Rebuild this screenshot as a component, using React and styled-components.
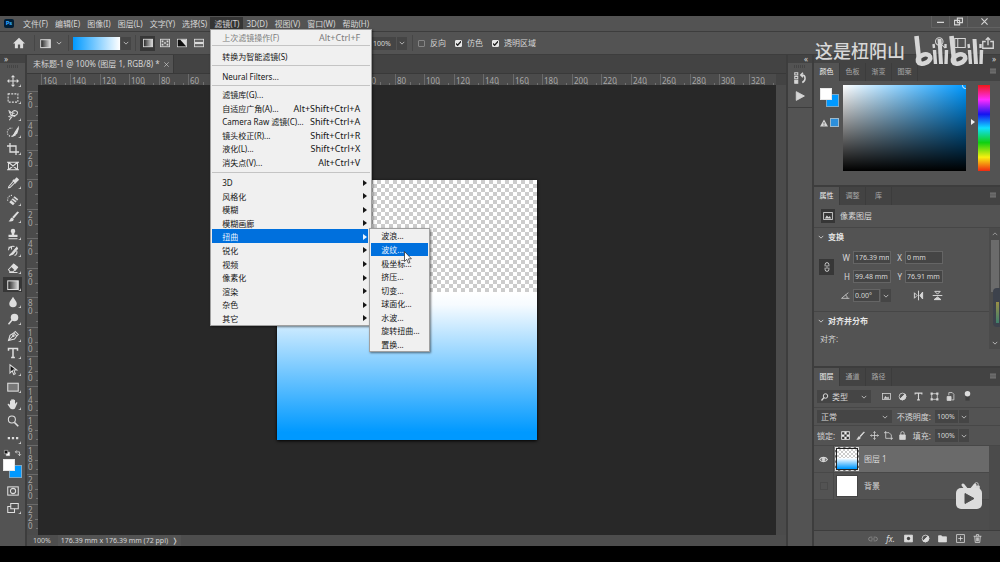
import React from 'react'
import styled, { createGlobalStyle, css } from 'styled-components'

const C = {
  panel: '#535353',
  strip: '#434343',
  line: '#3d3d3d',
  field: '#454545',
  fieldLine: '#656565',
  canvas: '#282828',
  ruler: '#4b4b4b',
  text: '#d6d6d6',
  dim: '#a8a8a8',
  accent: '#0099ff',
  menu: '#f0f0f0',
  select: '#0070dd',
}

const GlobalStyle = createGlobalStyle`
  * { box-sizing: border-box; }
  body { margin: 0; background: #000; }
  body, button, input, select {
    font-family: 'Noto Sans', 'Noto Sans CJK SC', sans-serif;
    font-size: 8px;
    line-height: 12px;
    color: ${C.text};
  }
  button { background: none; border: 0; padding: 0; }
  h2, ul, p { margin: 0; padding: 0; list-style: none; }
`

const checker = (size) => css`
  background-color: #fff;
  background-image: conic-gradient(#ccc 25%, #fff 0 50%, #ccc 0 75%, #fff 0);
  background-size: ${size}px ${size}px;
`

/* ---------- shell ---------- */

const Screen = styled.div`
  position: relative;
  display: flex;
  flex-direction: column;
  min-height: 100vh;
  padding: 16px 0;
  background: #000;
`

const Row = styled.div`
  display: flex;
  align-items: center;
  gap: ${(p) => p.$gap || 0}px;
`

const Workspace = styled.main`
  display: flex;
  flex: 1;
  gap: 2px;
  background: ${C.line};
`

const Svg = styled.svg`
  display: block;
  flex: none;
  overflow: visible;
`

const Icon = ({ size = 12, box = 16, children, ...rest }) => (
  <Svg
    width={size}
    height={size}
    viewBox={`0 0 ${box} ${box}`}
    fill="none"
    stroke="currentColor"
    strokeWidth="1.4"
    aria-hidden="true"
    {...rest}
  >
    {children}
  </Svg>
)

const Chevron = () => (
  <Icon size={6} strokeWidth="2">
    <path d="M2 5l6 6 6-6" />
  </Icon>
)

/* ---------- menu bar ---------- */

const TitleBar = styled.header`
  display: flex;
  height: 16px;
  padding-left: 4px;
  background: ${C.panel};
  border-bottom: 1px solid ${C.line};
`

const AppLogo = styled.span`
  width: 10px;
  height: 9px;
  margin: 3px 5px 0 0;
  border-radius: 2px;
  background: #001e36;
  color: #31a8ff;
  font-size: 6px;
  font-weight: 700;
  line-height: 8px;
  text-align: center;
`

const MenuBar = styled.nav`
  display: flex;
  flex: 1;
`

const MenuSlot = styled.div`
  position: relative;
`

const MenuButton = styled.button`
  height: 13px;
  margin-top: 1px;
  padding: 0 3px 0 4px;
  white-space: nowrap;
  background: ${(p) => (p.$open ? '#353535' : 'none')};
`

const WindowButton = styled.button`
  display: grid;
  place-items: center;
  width: ${(p) => p.$w}px;
  height: 12px;
  border: solid #626262;
  border-width: 0 0 1px 1px;
`

const Menu = styled.div`
  position: absolute;
  z-index: 5;
  top: 13px;
  left: 0;
  width: 162px;
  border: 1px solid #a0a0a0;
  background: ${C.menu};
  box-shadow: 1px 1px 2px rgba(0, 0, 0, 0.5);
`

const SubMenu = styled(Menu)`
  top: -1px;
  left: 158px;
  width: 61px;
`

const MenuGroup = styled.div`
  display: grid;
  grid-auto-rows: 1fr;
  height: ${(p) => p.$h}px;
  margin: ${(p) => p.$pad || '0'};
`

const Separator = styled.hr`
  height: 1px;
  margin: 0 1px;
  border: 0;
  background: #c4c4c4;
`

const ItemWrap = styled.div`
  position: relative;
  display: grid;
`

const MenuItem = styled.button`
  display: flex;
  align-items: center;
  justify-content: space-between;
  min-height: 0;
  margin: 0 ${(p) => (p.$sub ? 1 : 3)}px 0 1px;
  padding: ${(p) => (p.$sub ? '0 0 0 10px' : '2px 8px 0 10px')};
  color: ${(p) => (p.$active ? '#e8f4ff' : p.disabled ? '#7c7c7c' : '#151515')};
  background: ${(p) => (p.$active ? C.select : 'none')};
  line-height: 11px;
  white-space: nowrap;
`

const Shortcut = styled.span`
  font-size: 9px;
`

const ArrowMark = styled.span`
  margin-right: -7px;
  border: 3px solid transparent;
  border-left: 4px solid currentColor;
  border-right: 0;
`

const Cursor = styled(Svg)`
  position: absolute;
  z-index: 6;
  left: 34px;
  top: 8px;
`

/* ---------- options bar ---------- */

const OptionsBar = styled.div`
  display: flex;
  align-items: center;
  height: 23px;
  padding: 0 6px 0 12px;
  background: ${C.panel};
  border-bottom: 1px solid ${C.line};
`

const Rule = styled.span`
  width: 1px;
  height: 16px;
  margin: 0 ${(p) => p.$r || 5}px 0 ${(p) => p.$l || 7}px;
  background: #464646;
`

const IconButton = styled.button`
  display: grid;
  place-items: center;
  width: ${(p) => p.$w || 15}px;
  height: ${(p) => p.$h || 15}px;
  color: ${(p) => (p.$dim ? '#8a8a8a' : '#dcdcdc')};
  background: ${(p) => (p.$on ? '#373737' : 'none')};
`

const GradientSwatch = styled.button`
  width: 47px;
  height: 13px;
  background: linear-gradient(90deg, ${C.accent}, #fff);
`

const TypeGroup = styled.div`
  display: flex;
  gap: 2px;
  flex: none;
  width: 231px;
`

const Field = styled.input`
  width: ${(p) => p.$w || 38}px;
  height: 13px;
  padding: 0 1px;
  border: 1px solid ${C.fieldLine};
  border-radius: 0;
  background: ${C.field};
  font-size: 7px;
  outline: none;
`

const PlainField = styled(Field)`
  border-color: ${C.field};
`

const DropButton = styled.button`
  display: grid;
  place-items: center;
  width: 10px;
  height: 13px;
  margin-left: 1px;
  background: ${C.field};
`

const CheckLabel = styled.label`
  display: flex;
  align-items: center;
  gap: 5px;
  margin-right: 9px;
  white-space: nowrap;
`

const Check = styled.input`
  appearance: none;
  width: 7px;
  height: 7px;
  margin: 0;
  border: 1px solid #858585;
  border-radius: 1px;

  &:checked {
    border-color: #e6e6e6;
    background: #e6e6e6
      url("data:image/svg+xml,%3Csvg xmlns='http://www.w3.org/2000/svg' viewBox='0 0 8 8'%3E%3Cpath d='M1 4l2 2 4-4.500' fill='none' stroke='%23222' stroke-width='1.600'/%3E%3C/svg%3E")
      center / 7px 7px no-repeat;
  }
`

const Spacer = styled.span`
  flex: 1;
`

/* ---------- tool box ---------- */

const ToolColumn = styled.aside`
  width: 25px;
  background: ${C.panel};
`

const DockHead = styled.div`
  display: flex;
  align-items: center;
  justify-content: ${(p) => p.$at || 'flex-start'};
  height: 8px;
  padding: 0 4px;
  background: ${C.strip};
  line-height: 8px;
`

const Grip = styled.div`
  width: 12px;
  height: 3px;
  margin: 2px auto 4px;
  background: repeating-linear-gradient(90deg, #454545 0 1px, transparent 1px 2px);
`

const Tool = styled.button`
  position: relative;
  display: grid;
  place-items: center;
  width: 19px;
  height: ${(p) => p.$h || 17}px;
  margin-left: 3px;
  color: #dedede;

  ${(p) =>
    p.$on &&
    css`
      background: linear-gradient(#363636, #363636) center / 19px 15px no-repeat;
    `}

  &::after {
    content: '';
    display: ${(p) => (p.$flat ? 'none' : 'block')};
    position: absolute;
    right: 1px;
    bottom: 2px;
    border: solid transparent;
    border-width: 2px 0 0 2px;
    border-bottom: 1px solid #cfcfcf;
    border-right: 1px solid #cfcfcf;
  }
`

const SwatchPair = styled.div`
  display: grid;
  grid-template-columns: 6px 6px 7px;
  grid-template-rows: 6px 6px 7px;
  width: 19px;
  margin: ${(p) => p.$m};
`

const Swatch = styled.button`
  z-index: ${(p) => (p.$front ? 1 : 0)};
  grid-area: ${(p) => (p.$front ? '1 / 1 / 3 / 3' : '2 / 2 / 4 / 4')};
  border: 1px solid ${(p) => (p.$front ? '#e8e8e8' : '#7fa9c6')};
  background: ${(p) => p.$color};
`

/* ---------- document ---------- */

const DocColumn = styled.section`
  display: flex;
  flex: 1;
  min-width: 0;
  flex-direction: column;
  background: ${C.strip};
`

const DocTabs = styled.div`
  display: flex;
  height: 19px;
  border-bottom: 1px solid #393939;
`

const DocTab = styled.button`
  display: flex;
  align-items: center;
  gap: 4px;
  padding: 0 4px 0 6px;
  background: ${C.panel};
  border-right: 1px solid #393939;
  white-space: nowrap;
`

const RulerX = styled.div`
  display: flex;
  flex: none;
  height: 11px;
  padding-left: 14px;
  margin-right: 10px;
  overflow: hidden;
  background: ${C.ruler};
`

const TickX = styled.span`
  flex: none;
  width: 29px;
  padding-left: 1px;
  border-left: 1px solid #6a6a6a;
  color: ${C.dim};
  line-height: 13px;
  background:
    linear-gradient(#707070, #707070) 14px 100% / 1px 3px no-repeat,
    linear-gradient(#707070, #707070) 23px 100% / 1px 2px no-repeat;

  &:nth-child(even) {
    width: 30px;
  }
`

const DocBody = styled.div`
  display: flex;
  flex: 1;
  min-height: 0;
`

const RulerY = styled.div`
  width: 11px;
  padding-top: 6px;
  overflow: hidden;
  background: ${C.ruler};
`

const TickY = styled.span`
  display: block;
  width: 11px;
  height: 29px;
  padding: 1px 5px 0 1px;
  border-top: 1px solid #6a6a6a;
  color: ${C.dim};
  line-height: 8px;
  word-break: break-all;
  background:
    linear-gradient(#707070, #707070) 100% 14px / 3px 1px no-repeat,
    linear-gradient(#707070, #707070) 100% 23px / 2px 1px no-repeat;

  &:nth-child(even) {
    height: 30px;
  }
`

const Canvas = styled.div`
  position: relative;
  flex: 1;
  background: ${C.canvas};
`

const ScrollStrip = styled.div`
  width: 10px;
  background: ${C.ruler};
`

const Artboard = styled.div`
  position: absolute;
  left: 239px;
  top: 95px;
  width: 260px;
  height: 260px;
  box-shadow: 0 1px 3px #000;
  ${checker(8)}
`

const Paint = styled.div`
  height: 100%;
  background: linear-gradient(transparent 43%, #fff 43%, #f6fbff 48%, ${C.accent} 97%);
`

const StatusBar = styled.footer`
  display: flex;
  align-items: center;
  height: 11px;
  padding-left: 6px;
  background: #4d4d4d;
  color: #d0d0d0;
  font-size: 7px;
  white-space: nowrap;
`

const StatusInfo = styled.button`
  display: flex;
  align-items: center;
  gap: 4px;
  height: 11px;
  margin-left: 7px;
  padding: 0 3px;
  background: ${C.panel};
  font-size: 7px;
`

/* ---------- right side ---------- */

const IconDock = styled.aside`
  width: 24px;
  background: ${C.panel};
`

const DockBlock = styled.div`
  display: flex;
  flex-direction: column;
  align-items: center;
  gap: 7px;
  height: 45px;
  border-bottom: 1px solid ${C.line};
`

const DockGrip = styled(Grip)`
  margin: 2px 0 -3px;
`

const Panels = styled.aside`
  display: flex;
  flex-direction: column;
  width: 186px;
  background: ${C.panel};
`

const PanelTabs = styled.div`
  display: flex;
  flex: none;
  height: 18px;
  padding-right: 3px;
  background: ${C.strip};
`

const PanelTab = styled.button`
  width: 26px;
  border-right: 1px solid #3c3c3c;
  font-size: 7px;
  color: ${(p) => (p.$on ? '#f0f0f0' : C.dim)};
  background: ${(p) => (p.$on ? C.panel : 'none')};
`

const ColorPanel = styled.section`
  display: flex;
  height: 106px;
  padding: 4px 10px 0 6px;
  border-bottom: 2px solid ${C.line};
`

const ColorSide = styled.div`
  width: 23px;
  padding-top: 2px;
`

const WebColor = styled.button`
  width: 9px;
  height: 9px;
  border: 1px solid #9db9cc;
  background: #2c8fdb;
`

const Field2D = styled.div`
  flex: 1;
  height: 86px;
  overflow: hidden;
  background:
    linear-gradient(transparent, #000),
    linear-gradient(90deg, #fff, ${C.accent});
`

const Picker = styled.span`
  display: block;
  width: 7px;
  height: 7px;
  margin: -3px -3px 0 auto;
  border: 1px solid #d8efff;
  border-radius: 50%;
`

const HueMark = styled.span`
  width: 4px;
  height: 0;
  margin: 34px 3px 0 5px;
  border: 3px solid transparent;
  border-left: 4px solid #eee;
  border-right: 0;
`

const Hue = styled.div`
  width: 12px;
  height: 86px;
  background: linear-gradient(#f01818, #ff2cff 17%, #1414f0 34%, #10e0ff 50%, #10d010 67%, #f8f010 84%, #f02810);
`

const Properties = styled.section`
  height: 163px;
  border-bottom: 2px solid ${C.line};
`

const LayerKind = styled.div`
  display: flex;
  align-items: center;
  gap: 5px;
  height: 23px;
  padding-left: 7px;
  border-bottom: 1px solid #464646;
`

const KindIcon = styled.span`
  display: grid;
  place-items: center;
  width: 14px;
  height: 14px;
  background: #363636;
`

const Scroller = styled.div`
  display: flex;
  height: 121px;
`

const Sections = styled.div`
  flex: 1;
`

const SectionTitle = styled.button`
  display: flex;
  align-items: center;
  gap: 4px;
  width: 100%;
  height: 18px;
  padding-left: 4px;
  font-weight: 700;
  color: #e6e6e6;
`

const TransformGrid = styled.div`
  display: grid;
  grid-template-columns: 15px 13px 38px 8px 38px;
  grid-template-rows: 13px 13px 13px;
  gap: 6px 3px;
  align-items: center;
  justify-items: end;
  height: 66px;
  padding: 5px 0 0 5px;
  border-bottom: 1px solid #464646;
`

const LinkButton = styled(IconButton)`
  grid-row: 1 / 3;
`

const AlignLabel = styled.p`
  padding: 3px 6px;
`

const ScrollBar = styled.div`
  display: flex;
  flex-direction: column;
  align-items: center;
  gap: 3px;
  width: 11px;
  padding: 3px 0;
  background: #4b4b4b;
`

const Thumb = styled.span`
  width: 8px;
  height: 52px;
  background: #6b6b6b;
`

const Layers = styled.section`
  display: flex;
  flex: 1;
  flex-direction: column;
`

const LayerTools = styled.div`
  display: flex;
  align-items: center;
  flex: none;
  height: ${(p) => p.$h}px;
  padding: 0 3px;
  border-bottom: 1px solid #474747;
  white-space: nowrap;
`

const SelectBox = styled.label`
  display: flex;
  align-items: center;
  gap: 3px;
  width: ${(p) => p.$w}px;
  height: 13px;
  padding: 0 4px;
  background: ${C.field};
`

const Select = styled.select`
  flex: 1;
  min-width: 0;
  height: 13px;
  padding: 0;
  appearance: none;
  border: 0;
  background: none;
`

const Icons = styled.div`
  display: flex;
  align-items: center;
  gap: ${(p) => p.$gap}px;
  margin-left: ${(p) => p.$ml || 0}px;
`

const ValueGroup = styled.div`
  display: flex;
  align-items: center;
  margin: 0 28px 0 auto;

  label {
    margin-right: 4px;
  }
`

const LayerList = styled.ul`
  flex: 1;
  padding-right: 11px;
  background: linear-gradient(#4b4b4b, #4b4b4b) right / 11px 100% no-repeat #4d4d4d;
`

const Layer = styled.li`
  display: flex;
  align-items: center;
  height: 27px;
  border-bottom: 1px solid #484848;
  background: ${(p) => (p.$on ? '#6a6a6a' : C.panel)};
`

const EyeCell = styled.button`
  display: grid;
  place-items: center;
  width: 20px;
  height: 26px;
  border-right: 1px solid #484848;
  background: ${C.panel};
`

const EmptyEye = styled.span`
  width: 8px;
  height: 8px;
  border: 1px solid #4a4a4a;
`

const LayerThumb = styled.span`
  width: 22px;
  height: 22px;
  margin: 0 6px 0 2px;
  border: 1px solid ${(p) => (p.$art ? '#222' : '#444')};
  outline: ${(p) => (p.$art ? '1px dashed #ddd' : 'none')};
  background: #fff;
  ${(p) => p.$art && checker(4)}
`

const LayerLock = styled.span`
  margin: 0 8px 0 auto;
`

const PanelFoot = styled.footer`
  display: flex;
  align-items: center;
  justify-content: flex-end;
  gap: 7px;
  height: 16px;
  padding-right: 17px;
  border-top: 1px solid ${C.line};
`

/* ---------- video overlays ---------- */

const Watermark = styled.div`
  position: absolute;
  top: 33px;
  right: 15px;
  display: flex;
  align-items: center;
  gap: 9px;
  color: #d8d8d8;
  font-size: 18px;
  font-weight: 500;
  line-height: 36px;
  white-space: nowrap;
`

const PlayBadge = styled(Svg)`
  position: absolute;
  right: 18px;
  bottom: 52px;
`

const VolumeTab = styled.span`
  position: absolute;
  top: 288px;
  right: 0;
  width: 7px;
  height: 39px;
  border-radius: 4px 0 0 4px;
  background:
    linear-gradient(#9a8f45, #3f7f6c) 3px 14px / 3px 21px no-repeat,
    #3d424c;
`

/* ---------- data ---------- */

const menus = ['文件(F)', '编辑(E)', '图像(I)', '图层(L)', '文字(Y)', '选择(S)', '滤镜(T)', '3D(D)', '视图(V)', '窗口(W)', '帮助(H)']

const filterItems = [
  ['滤镜库(G)...', ''],
  ['自适应广角(A)...', 'Alt+Shift+Ctrl+A'],
  ['Camera Raw 滤镜(C)...', 'Shift+Ctrl+A'],
  ['镜头校正(R)...', 'Shift+Ctrl+R'],
  ['液化(L)...', 'Shift+Ctrl+X'],
  ['消失点(V)...', 'Alt+Ctrl+V'],
]

const filterGroups = ['3D', '风格化', '模糊', '模糊画廊', '扭曲', '锐化', '视频', '像素化', '渲染', '杂色', '其它']

const distortItems = ['波浪...', '波纹...', '极坐标...', '挤压...', '切变...', '球面化...', '水波...', '旋转扭曲...', '置换...']

const ticksX = Array.from({ length: 25 }, (_, i) => Math.abs(i * 20 - 160))
const ticksY = Array.from({ length: 15 }, (_, i) => Math.abs(i * 20 - 60))

const tools = [
  ['移动', <path d="M8 1v14M1 8h14M6 3l2-2 2 2M6 13l2 2 2-2M3 6L1 8l2 2M13 6l2 2-2 2" />],
  ['选框', <rect x="1.500" y="2.500" width="13" height="11" strokeDasharray="2.600 1.600" />],
  ['套索', <path d="M2 2l4 3M7 4c2-3 7-2 7 1s-4 5-7 3V5l3 1M7 9l-5 1 4 1-3 4M3 4l3 5M7 9l4 1" />],
  ['快速选择', <><path d="M7 13.500A5 5.500 0 117 3" strokeDasharray="1.500 1.500" /><path d="M15 2l-4 6-1 2 1 1 2-1 2-6zM10 10l-3 4 4-2z" fill="currentColor" /></>],
  ['裁剪', <path d="M4 0v12h12M0 4h12v12" strokeWidth="1.700" />],
  ['图框', <path d="M2 3h12v10H2zM2 3l12 10M14 3L2 13M0 3h3M13 3h3M0 13h3M13 13h3" />],
  ['吸管', <><path d="M9 5l2 2-7 7-2 .5.500-2z" /><path d="M8 4l4 4M10 5l3-3 1.500 1.500-3 3z" strokeWidth="2.400" /></>],
  ['修复', <><path d="M3 11l7-8 5 4-7 8z" fill="currentColor" stroke="none" /><path d="M6 8l5 4M8 5l5 4" stroke="#666" /><path d="M1 9C0 4 4 1 8 2" strokeDasharray="1.500 1.500" /></>],
  ['画笔', <><path d="M14 1.500L8 8l1 1 6-7z" fill="currentColor" /><path d="M7 8.500c-3 0-2 4-5 5 4 1 7 0 7-3z" fill="currentColor" stroke="none" /></>],
  ['图章', <path d="M8 1a3 3 0 013 3c0 2-1.500 2-1.500 5H14v3H2V9h4.500C6.500 6 5 6 5 4a3 3 0 013-3zM2 13.500h12V15H2z" fill="currentColor" stroke="none" />],
  ['历史画笔', <><path d="M13 3l-6 7-4 4 5-2 6-7z" fill="currentColor" /><path d="M2 3h4v3M2 7a6 5 0 018-5M13 8a5 5 0 01-3 6" /></>],
  ['橡皮擦', <><path d="M2 10l7-7 5 4-6 6H4z" /><path d="M6 6l5 5 3-4-5-4z" fill="currentColor" /><path d="M3 14h11" /></>],
  ['渐变', <rect x="1" y="2.500" width="14" height="11.500" fill="url(#toolGrad)" />],
  ['模糊', <path d="M8 1c2 4 5 6 5 9a5 5 0 01-10 0c0-3 3-5 5-9z" fill="currentColor" stroke="none" />],
  ['减淡', <><circle cx="10" cy="6" r="5" fill="currentColor" stroke="none" /><path d="M7 9l-5 6" strokeWidth="2" /></>],
  ['钢笔', <><path d="M2 14l2-7 5-3 4 4-3 4zM2 14l6-6M9 4l2-2 4 4-2 2" /><circle cx="8.500" cy="7.500" r="1" /></>],
  ['文字', <path d="M2 5V2h12v3M8 2v12M5.500 14h5" strokeWidth="2" />],
  ['路径选择', <path d="M4 1v11l3-3 2 5 2-1-2-5h4z" fill="#161616" />],
  ['矩形', <rect x="1" y="3" width="14" height="10.500" fill="#777" />],
  ['抓手', <path d="M4 9V4c0-1 1.500-1 1.500 0V2.500c0-1 1.700-1 1.700 0V2c0-1 1.800-1 1.800 0v1c0-1 1.700-1 1.700 0v5l1.500-2c1-1 2 0 1.500 1l-3 6.500c-1 2-5 2-6.500 0L1 9c-.5-1 .8-1.800 1.500-1z" fill="currentColor" stroke="none" />],
  ['缩放', <><circle cx="6.500" cy="6" r="4.700" /><path d="M10 10l5 5" strokeWidth="2.200" /></>],
  ['更多', <path d="M1 8h3M6.500 8h3M12 8h3" strokeWidth="3" />],
]

const gradientTypes = ['线性渐变', '径向渐变', '角度渐变', '对称渐变']

/* ---------- parts ---------- */

const DistortMenu = () => (
  <SubMenu>
    <MenuGroup $h={122}>
      {distortItems.map((name) => (
        <ItemWrap key={name}>
          <MenuItem $sub $active={name === '波纹...'}>{name}</MenuItem>
          {name === '波纹...' && (
            <Cursor width="8" height="13" viewBox="0 0 8 13">
              <path d="M.5.500v10l2.300-2.200 1.600 3.900 1.600-.7-1.600-3.700h3z" fill="#fff" stroke="#333" strokeWidth=".8" />
            </Cursor>
          )}
        </ItemWrap>
      ))}
    </MenuGroup>
  </SubMenu>
)

const FilterMenu = () => (
  <Menu>
    <MenuGroup $h={13} $pad="0 0 2px">
      <MenuItem disabled>上次滤镜操作(F)<Shortcut>Alt+Ctrl+F</Shortcut></MenuItem>
    </MenuGroup>
    <Separator />
    <MenuGroup $h={14} $pad="2px 0 3px"><MenuItem>转换为智能滤镜(S)</MenuItem></MenuGroup>
    <Separator />
    <MenuGroup $h={14} $pad="2px 0 3px"><MenuItem>Neural Filters...</MenuItem></MenuGroup>
    <Separator />
    <MenuGroup $h={81} $pad="1px 0 4px">
      {filterItems.map(([name, keys]) => (
        <MenuItem key={name}>{name}<Shortcut>{keys}</Shortcut></MenuItem>
      ))}
    </MenuGroup>
    <Separator />
    <MenuGroup $h={149} $pad="2px 0 1px">
      {filterGroups.map((name) => (
        <ItemWrap key={name}>
          <MenuItem $active={name === '扭曲'}>{name}<ArrowMark /></MenuItem>
          {name === '扭曲' && <DistortMenu />}
        </ItemWrap>
      ))}
    </MenuGroup>
  </Menu>
)

const GradientIcon = ({ kind }) => (
  <Icon size={10} box={12} strokeWidth="1">
    <rect x=".5" y="1.500" width="11" height="9" fill={kind === 0 ? 'url(#toolGrad)' : '#666'} />
    {kind === 1 && <path d="M2 3h2v2H2zM8 3h2v2H8zM2 7h2v2H2zM8 7h2v2H8zM5 5h2v2H5z" fill="currentColor" stroke="none" />}
    {kind === 2 && <path d="M1 2h3l7 8H1z" fill="#111" stroke="none" />}
    {kind === 2 && <path d="M4 2h7v8z" fill="currentColor" stroke="none" />}
    {kind === 3 && <path d="M1 6h10" strokeWidth="2.500" />}
  </Icon>
)

const PanelMenu = () => (
  <IconButton $w={9} $h={16} $dim aria-label="面板菜单">
    <Icon size={6}><path d="M0 3h16M0 8h16M0 13h16" strokeWidth="2.500" /></Icon>
  </IconButton>
)

const Tabs = ({ names }) => (
  <PanelTabs>
    {names.map((n, i) => <PanelTab key={n} $on={i === 0}>{n}</PanelTab>)}
    <Spacer />
    <PanelMenu />
  </PanelTabs>
)

const ImageGlyph = ({ size = 10 }) => (
  <Icon size={size}>
    <rect x="1" y="2.500" width="14" height="11" />
    <path d="M3 12l3-5 3 3 2-2 2 4z" fill="currentColor" stroke="none" />
  </Icon>
)

const HalfCircle = () => (
  <Icon size={9}><circle cx="8" cy="8" r="6" /><path d="M12.500 3.500A6.400 6.400 0 013.500 12.500z" fill="currentColor" /></Icon>
)

const LockGlyph = () => (
  <Icon size={9}><path d="M3 7h10v8H3z" fill="currentColor" /><path d="M5 7V4a3 3 0 016 0v3" /></Icon>
)

const BrandLogo = () => (
  <Svg width="71" height="33" viewBox="0 0 71 33" fill="none" stroke="#d6d6d6" aria-label="bilibili">
    {[0, 35].map((x) => (
      <g key={x} transform={`translate(${x} 0)`}>
        <line x1="2.500" y1="1" x2="5.500" y2="29" strokeWidth="4.600" />
        <ellipse cx="10" cy="24" rx="6.500" ry="4.300" strokeWidth="4.600" transform="rotate(-22 10 24)" />
        <line x1="20.500" y1="15" x2="21.500" y2="29" strokeWidth="3.400" />
        <line x1="19.500" y1="9" x2="20" y2="13" strokeWidth="2.400" />
        <line x1="25.500" y1="4" x2="27" y2="29" strokeWidth="4" />
        <line x1="32.500" y1="15" x2="32" y2="29" strokeWidth="3.400" />
        <line x1="31.500" y1="9" x2="31.500" y2="13" strokeWidth="2.400" />
      </g>
    ))}
  </Svg>
)

const ColorSection = () => (
  <>
    <Tabs names={['颜色', '色板', '渐变', '图案']} />
    <ColorPanel>
      <ColorSide>
        <SwatchPair $m="1px 0 11px">
          <Swatch $front $color="#fff" aria-label="前景色" />
          <Swatch $color={C.accent} aria-label="背景色" />
        </SwatchPair>
        <Row $gap={2}>
          <Icon size={8}><path d="M8 1l8 14H0z" fill="currentColor" stroke="none" /><path d="M8 6v5M8 12.500v1.500" stroke="#444" /></Icon>
          <WebColor aria-label="Web 颜色" />
        </Row>
      </ColorSide>
      <Field2D><Picker /></Field2D>
      <HueMark />
      <Hue />
    </ColorPanel>
  </>
)

const PropertiesSection = () => (
  <>
    <Tabs names={['属性', '调整', '库']} />
    <Properties>
      <LayerKind><KindIcon><ImageGlyph /></KindIcon>像素图层</LayerKind>
      <Scroller>
        <Sections>
          <SectionTitle><Chevron />变换</SectionTitle>
          <TransformGrid>
            <LinkButton $on $h={16} aria-label="链接">
              <Icon size={10}><path d="M5 7V4a3 3 0 016 0v3M5 9v3a3 3 0 006 0V9M8 5v6" /></Icon>
            </LinkButton>
            <label htmlFor="w">W</label><Field id="w" defaultValue="176.39 mm" />
            <label htmlFor="x">X</label><Field id="x" defaultValue="0 mm" />
            <label htmlFor="h">H</label><Field id="h" defaultValue="99.48 mm" />
            <label htmlFor="y">Y</label><Field id="y" defaultValue="76.91 mm" />
            <span />
            <label htmlFor="a" aria-label="角度">
              <Icon size={9}><path d="M13 3L1 13h14M8 7c2 1 3 3 3 6" /></Icon>
            </label>
            <Row><Field $w={27} id="a" defaultValue="0.00°" /><DropButton aria-label="角度选项"><Chevron /></DropButton></Row>
            <span />
            <Row $gap={8}>
              <Icon size={11}><path d="M2 4v8l4-4zM8 1v14" /><path d="M14 3v10L10 8z" fill="currentColor" /></Icon>
              <Icon size={11}><path d="M4 2h8L8 6zM1 8h14" /><path d="M3 14h10l-5-4z" fill="currentColor" /></Icon>
            </Row>
          </TransformGrid>
          <SectionTitle><Chevron />对齐并分布</SectionTitle>
          <AlignLabel>对齐:</AlignLabel>
        </Sections>
        <ScrollBar>
          <Icon size={6}><path d="M2 11l6-6 6 6" /></Icon>
          <Thumb />
          <Spacer />
          <Chevron />
        </ScrollBar>
      </Scroller>
    </Properties>
  </>
)

const LayersSection = () => (
  <Layers>
    <Tabs names={['图层', '通道', '路径']} />
    <LayerTools $h={22}>
      <SelectBox $w={54}>
        <Icon size={8}><circle cx="9" cy="6" r="4.500" strokeWidth="2" /><path d="M6 9l-5 6" strokeWidth="2.500" /></Icon>
        <Select aria-label="筛选"><option>类型</option></Select>
        <Chevron />
      </SelectBox>
      <Icons $gap={7} $ml={11}>
        <ImageGlyph size={9} />
        <HalfCircle />
        <Icon size={9}><path d="M2 4.500V2h12v2.500M8 2v12M5.500 14h5" strokeWidth="2" /></Icon>
        <Icon size={9}><path d="M3 3h10v10H3z" /><path d="M1 1h4v4H1zM11 1h4v4h-4zM1 11h4v4H1zM11 11h4v4h-4z" fill="currentColor" stroke="none" /></Icon>
        <Icon size={9}><path d="M5 6V1h6l3 3v10h-4" /><path d="M2 8h7v7H2z" fill="currentColor" /></Icon>
        <Icon size={11}><rect x="5" y="2" width="6" height="12" fill="#3f3f3f" stroke="none" /><circle cx="8" cy="4" r="4" fill="#ddd" stroke="none" /></Icon>
      </Icons>
    </LayerTools>
    <LayerTools $h={18}>
      <SelectBox $w={75}>
        <Select aria-label="混合模式"><option>正常</option></Select>
        <Chevron />
      </SelectBox>
      <ValueGroup>
        <label htmlFor="op">不透明度:</label>
        <PlainField $w={23} id="op" defaultValue="100%" />
        <DropButton aria-label="不透明度选项"><Chevron /></DropButton>
      </ValueGroup>
    </LayerTools>
    <LayerTools $h={20}>
      <span>锁定:</span>
      <Icons $gap={5} $ml={6}>
        <Icon size={9}><path d="M1 1h14v14H1z" fill="#eee" /><path d="M2 2h4v4H2zM10 2h4v4h-4zM6 6h4v4H6zM2 10h4v4H2zM10 10h4v4h-4z" fill="#333" stroke="none" /></Icon>
        <Icon size={10}>{tools[8][1]}</Icon>
        <Icon size={9}>{tools[0][1]}</Icon>
        <Icon size={9}><path d="M3 0v13h13M0 3h9l4 4v9" /></Icon>
        <LockGlyph />
      </Icons>
      <ValueGroup>
        <label htmlFor="fill">填充:</label>
        <PlainField $w={23} id="fill" defaultValue="100%" />
        <DropButton aria-label="填充选项"><Chevron /></DropButton>
      </ValueGroup>
    </LayerTools>
    <LayerList>
      <Layer $on>
        <EyeCell aria-label="可见">
          <Icon size={9}><path d="M1 8c3-5 11-5 14 0-3 5-11 5-14 0z" strokeWidth="2" /><circle cx="8" cy="8" r="2.500" fill="currentColor" /></Icon>
        </EyeCell>
        <LayerThumb $art><Paint /></LayerThumb>
        图层 1
      </Layer>
      <Layer>
        <EyeCell aria-label="隐藏"><EmptyEye /></EyeCell>
        <LayerThumb />
        背景
        <LayerLock><LockGlyph /></LayerLock>
      </Layer>
    </LayerList>
    <PanelFoot>
      <IconButton $w={11} $dim aria-label="链接图层"><Icon size={10}><path d="M7 5H4a3 3 0 000 6h3M9 5h3a3 3 0 010 6H9M5 8h6" /></Icon></IconButton>
      <IconButton $w={11}><i>fx.</i></IconButton>
      <IconButton $w={10} aria-label="蒙版"><Icon size={9}><path d="M1 2h14v12H1z" fill="currentColor" /><circle cx="8" cy="8" r="3" fill="#444" stroke="none" /></Icon></IconButton>
      <IconButton $w={10} aria-label="调整图层"><HalfCircle /></IconButton>
      <IconButton $w={11} aria-label="新建组"><Icon size={9}><path d="M1 3h5l2 2h7v9H1z" fill="currentColor" /></Icon></IconButton>
      <IconButton $w={10} aria-label="新建图层"><Icon size={9}><path d="M1 1h14v14H1zM8 4v8M4 8h8" /></Icon></IconButton>
      <IconButton $w={11} aria-label="删除"><Icon size={9}><path d="M1 4h14M6 4V1h4v3M3 4l1 11h8l1-11M6 6v7M8 6v7M10 6v7" /></Icon></IconButton>
    </PanelFoot>
  </Layers>
)

const ToolBox = () => (
  <ToolColumn>
    <DockHead>»</DockHead>
    <Grip />
    {tools.map(([name, shape]) => (
      <Tool key={name} aria-label={name} $on={name === '渐变'} $flat={name === '图框' || name === '缩放'}>
        <Icon size={12}>{shape}</Icon>
      </Tool>
    ))}
    <Tool as="div" $h={13} $flat>
      <Row $gap={5}>
        <Icon size={6}><path d="M6 6h9v9H6z" fill="#fff" /><path d="M1 1h9v9H1z" fill="#111" /></Icon>
        <Icon size={6}><path d="M5 1L1 5l4 4M1 5h11v10M8 11l4 4 4-4" strokeWidth="2" /></Icon>
      </Row>
    </Tool>
    <SwatchPair $m="0 0 4px 3px">
      <Swatch $front $color="#fff" aria-label="前景色" />
      <Swatch $color={C.accent} aria-label="背景色" />
    </SwatchPair>
    <Tool $flat aria-label="快速蒙版"><Icon size={12}><rect x="1" y="2.500" width="14" height="11" /><circle cx="8" cy="8" r="3.500" /></Icon></Tool>
    <Tool aria-label="屏幕模式"><Icon size={12}><path d="M5 2h10v7H5z" /><path d="M5 6H1v8h9V9" /></Icon></Tool>
  </ToolColumn>
)

const App = () => (
  <Screen>
    <GlobalStyle />
    <Svg width="0" height="0">
      <linearGradient id="toolGrad"><stop stopColor="#222" /><stop offset="1" stopColor="#ddd" /></linearGradient>
    </Svg>

    <TitleBar>
      <AppLogo>Ps</AppLogo>
      <MenuBar>
        {menus.map((name) => (
          <MenuSlot key={name}>
            <MenuButton $open={name === '滤镜(T)'}>{name}</MenuButton>
            {name === '滤镜(T)' && <FilterMenu />}
          </MenuSlot>
        ))}
      </MenuBar>
      <WindowButton $w={18} aria-label="最小化"><Icon size={7}><path d="M0 10h16" strokeWidth="3" /></Icon></WindowButton>
      <WindowButton $w={18} aria-label="还原"><Icon size={9}><path d="M6 2h9v8H6zM1 6h9v8H1z" strokeWidth="2" /></Icon></WindowButton>
      <WindowButton $w={33} aria-label="关闭"><Icon size={7}><path d="M1 1l14 14M15 1L1 15" strokeWidth="2.500" /></Icon></WindowButton>
    </TitleBar>

    <OptionsBar>
      <IconButton $w={13} aria-label="主页"><Icon size={12}><path d="M8 1l8 7.500h-2.500V15h-4v-5h-3v5h-4V8.500H0z" fill="currentColor" stroke="none" /></Icon></IconButton>
      <Rule $l={9} />
      <IconButton $w={11} aria-label="渐变工具"><Icon size={11}>{tools[12][1]}</Icon></IconButton>
      <IconButton $w={16} aria-label="工具预设"><Chevron /></IconButton>
      <Rule $l={1} $r={4} />
      <GradientSwatch aria-label="编辑渐变" />
      <DropButton aria-label="渐变列表"><Chevron /></DropButton>
      <Rule $l={4} $r={4} />
      <TypeGroup>
        {gradientTypes.map((name, i) => (
          <IconButton key={name} $on={i === 0} aria-label={name}><GradientIcon kind={i} /></IconButton>
        ))}
      </TypeGroup>
      <PlainField $w={25} aria-label="不透明度" defaultValue="100%" />
      <DropButton aria-label="不透明度选项"><Chevron /></DropButton>
      <Rule $l={5} $r={5} />
      <CheckLabel><Check type="checkbox" />反向</CheckLabel>
      <CheckLabel><Check type="checkbox" defaultChecked />仿色</CheckLabel>
      <CheckLabel><Check type="checkbox" defaultChecked />透明区域</CheckLabel>
      <Spacer />
      <Icons $gap={8}>
        <Icon size={12}><circle cx="7" cy="6" r="5" /><path d="M10 10l5 5" /></Icon>
        <Icon size={12}><path d="M1 2h14v12H1zM5 2v12" /></Icon>
        <span />
        <Icon size={12}><path d="M5 6H1v9h14V6h-4M8 11V1M5 4l3-3 3 3" strokeWidth="1.800" /></Icon>
      </Icons>
    </OptionsBar>

    <Workspace>
      <ToolBox />
      <DocColumn>
        <DocTabs>
          <DocTab>
            未标题-1 @ 100% (图层 1, RGB/8) *
            <Icon size={5}><path d="M1 1l14 14M15 1L1 15" strokeWidth="2" /></Icon>
          </DocTab>
        </DocTabs>
        <RulerX>{ticksX.map((n, i) => <TickX key={i}>{n}</TickX>)}</RulerX>
        <DocBody>
          <RulerY>{ticksY.map((n, i) => <TickY key={i}>{n}</TickY>)}</RulerY>
          <Canvas><Artboard><Paint /></Artboard></Canvas>
          <ScrollStrip />
        </DocBody>
        <StatusBar>
          100%
          <StatusInfo>176.39 mm x 176.39 mm (72 ppi)<span>❭</span></StatusInfo>
        </StatusBar>
      </DocColumn>
      <IconDock>
        <DockHead $at="flex-end">«</DockHead>
        <DockBlock>
          <DockGrip />
          <Icon size={12}><path d="M1 1h4v3H1zM1 6h4v3H1z" /><path d="M1 11h4v4H1z" fill="currentColor" /><path d="M9 4h2c5 0 5 8 0 10M12 1L9 4l3 3" strokeWidth="2" /></Icon>
          <Icon size={10}><path d="M2 1l13 7-13 7z" fill="currentColor" /></Icon>
        </DockBlock>
      </IconDock>
      <Panels>
        <DockHead $at="flex-end">»</DockHead>
        <ColorSection />
        <PropertiesSection />
        <LayersSection />
      </Panels>
    </Workspace>

    <Watermark>这是杻阳山<BrandLogo /></Watermark>
    <PlayBadge width="26" height="26" viewBox="0 0 26 26">
      <path d="M7 1l4 5M19 1l-4 5" stroke="#dcdcdc" strokeWidth="3" strokeLinecap="round" />
      <rect y="4" width="26" height="21" rx="5" fill="#dcdcdc" />
      <path d="M9 9.500v10l9-5z" fill="#4d4d4d" stroke="#4d4d4d" strokeLinejoin="round" />
    </PlayBadge>
    <VolumeTab />
  </Screen>
)

export default App
